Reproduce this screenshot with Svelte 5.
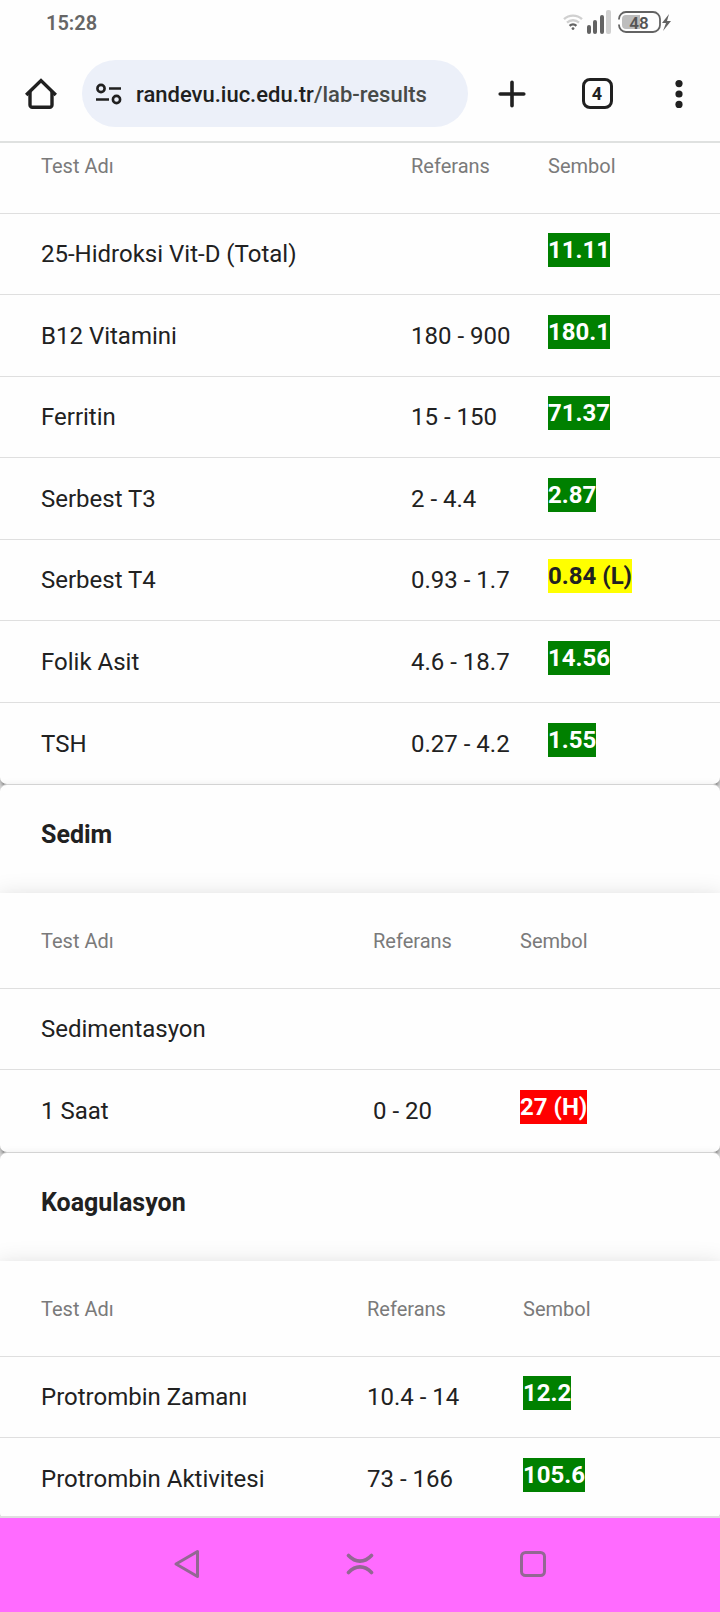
<script>
    const groups = [
        {
            title: '',
            refWidth: 137,
            symbolWidth: 172,
            tests: [
                { name: '25-Hidroksi Vit-D (Total)', ref: '', value: '11.11', level: 'normal' },
                { name: 'B12 Vitamini', ref: '180 - 900', value: '180.1', level: 'normal' },
                { name: 'Ferritin', ref: '15 - 150', value: '71.37', level: 'normal' },
                { name: 'Serbest T3', ref: '2 - 4.4', value: '2.87', level: 'normal' },
                { name: 'Serbest T4', ref: '0.93 - 1.7', value: '0.84 (L)', level: 'low' },
                { name: 'Folik Asit', ref: '4.6 - 18.7', value: '14.56', level: 'normal' },
                { name: 'TSH', ref: '0.27 - 4.2', value: '1.55', level: 'normal' }
            ]
        },
        {
            title: 'Sedim',
            refWidth: 147,
            symbolWidth: 200,
            tests: [
                { name: 'Sedimentasyon', ref: '', value: '', level: '' },
                { name: '1 Saat', ref: '0 - 20', value: '27 (H)', level: 'high' }
            ]
        },
        {
            title: 'Koagulasyon',
            refWidth: 156,
            symbolWidth: 197,
            tests: [
                { name: 'Protrombin Zamanı', ref: '10.4 - 14', value: '12.2', level: 'normal' },
                { name: 'Protrombin Aktivitesi', ref: '73 - 166', value: '105.6', level: 'normal' }
            ]
        }
    ];
</script>

<div class="screen">
    <div class="statusBar">
        <span class="clock">15:28</span>
        <div class="statusIcons">
            <svg class="wifi" width="20" height="18" viewBox="0 0 20 18" fill="none" stroke-linecap="butt">
                <path d="M1 6.2a13 13 0 0 1 18 0" stroke="#d0d0d0" stroke-width="2.4" />
                <path d="M4 9.6a9 9 0 0 1 12 0" stroke="#d0d0d0" stroke-width="2.4" />
                <path d="M6.6 12.8a5 5 0 0 1 6.8 0" stroke="#636363" stroke-width="2.4" />
                <circle cx="10" cy="15.6" r="1.4" fill="#636363" />
            </svg>
            <svg width="24" height="24" viewBox="0 0 24 24">
                <rect x="0" y="15" width="4" height="9" rx="2" fill="#636363" />
                <rect x="6" y="10" width="4" height="14" rx="2" fill="#636363" />
                <rect x="13" y="5" width="4" height="19" rx="2" fill="#636363" />
                <rect x="19" y="0" width="5" height="24" rx="2" fill="#d0d0d0" />
            </svg>
            <div class="battery">
                <svg width="54" height="22" viewBox="0 0 54 22">
                    <path d="M5 4h17v14H8a4 4 0 0 1-4-4V8a4 4 0 0 1 4-4z" fill="#bdbdbd" />
                    <path d="M1 8.500V8a7 7 0 0 1 7-7h27a7 7 0 0 1 7 7v6a7 7 0 0 1-7 7H8a7 7 0 0 1-7-7v-.5" fill="none" stroke="#636363" stroke-width="1.8" />
                    <path d="M51 3l-7 9h4l-3 8 8-10h-4z" fill="#636363" />
                </svg>
                <span class="batteryText">48</span>
            </div>
        </div>
    </div>

    <header class="toolbar">
        <button class="homeButton" aria-label="Home">
            <svg width="32" height="32" viewBox="0 0 32 32" fill="none" stroke="#202020" stroke-width="3.4">
                <path d="M1.200 17L16 2.600 30.800 17" />
                <path d="M5 13.500V27a2.300 2.300 0 0 0 2.300 2.300h17.400A2.300 2.300 0 0 0 27 27V13.500" />
            </svg>
        </button>
        <div class="address">
            <button class="siteInfo" aria-label="Site information">
                <svg width="26" height="22" viewBox="0 0 26 22" fill="none" stroke="#202020" stroke-width="2.600">
                    <circle cx="5" cy="5.500" r="3.600" />
                    <path d="M13 5.500h12M0 16.500h13" />
                    <circle cx="20.500" cy="16.500" r="3.600" />
                </svg>
            </button>
            <a class="url" href="#lab-results">randevu.iuc.edu.tr<span class="path">/lab-results</span></a>
        </div>
        <button class="newTab" aria-label="New tab">
            <svg width="28" height="28" viewBox="0 0 28 28" stroke="#202020" stroke-width="3.600" stroke-linecap="round">
                <path d="M14 2.200v23.600M2.200 14h23.600" />
            </svg>
        </button>
        <button class="toolButton" aria-label="4 open tabs">
            <span class="tabCount">4</span>
        </button>
        <button class="toolButton" aria-label="Menu">
            <svg width="8" height="28" viewBox="0 0 8 28" fill="#202020">
                <circle cx="4" cy="3.600" r="3.600" />
                <circle cx="4" cy="14" r="3.600" />
                <circle cx="4" cy="24.400" r="3.600" />
            </svg>
        </button>
    </header>

    <main class="page">
        <div class="results">
            {#each groups as group (group.title)}
            <section class="card">
                {#if group.title}
                    <h2 class="title">{group.title}</h2>
                {/if}
                <table>
                    <colgroup>
                        <col />
                        <col style="width: {group.refWidth}px" />
                        <col style="width: {group.symbolWidth}px" />
                    </colgroup>
                    <thead>
                        <tr>
                            <th>Test Adı</th>
                            <th>Referans</th>
                            <th>Sembol</th>
                        </tr>
                    </thead>
                    <tbody>
                        {#each group.tests as test (test.name)}
                        <tr>
                            <td>{test.name}</td>
                            <td>{test.ref}</td>
                            <td class="symbol">
                                {#if test.value}
                                    <span class="badge {test.level}">{test.value}</span>
                                {/if}
                            </td>
                        </tr>
                        {/each}
                    </tbody>
                </table>
            </section>
            {/each}
        </div>
    </main>

    <nav class="navBar">
        <button aria-label="Back">
            <svg width="28" height="30" viewBox="0 0 28 30" fill="none" stroke="#936793" stroke-width="3" stroke-linejoin="round">
                <path d="M24.500 2.500v25L3 15z" />
            </svg>
        </button>
        <button aria-label="Home screen">
            <svg width="28" height="22" viewBox="0 0 28 22" fill="none" stroke="#936793" stroke-width="3.600" stroke-linecap="round">
                <path d="M2.500 2.500c7 7.500 16 7.500 23 0M2.500 19.500c7-7.500 16-7.500 23 0" />
            </svg>
        </button>
        <button aria-label="Recent apps">
            <svg width="26" height="26" viewBox="0 0 26 26" fill="none" stroke="#936793" stroke-width="3">
                <rect x="1.500" y="1.500" width="23" height="23" rx="4" />
            </svg>
        </button>
    </nav>
</div>

<style>
    :global(body) {
        margin: 0;
        background: #fefefe;
    }

    .screen {
        display: flex;
        flex-direction: column;
        height: 100vh;
        overflow: hidden;
        background: #fefefe;
        color: #212121;
        font-family: Roboto, sans-serif;
    }

    button {
        display: flex;
        align-items: center;
        justify-content: center;
        padding: 0;
        border: 0;
        background: none;
        font-family: inherit;
        color: inherit;
    }

    svg {
        display: block;
    }

    .statusBar {
        display: flex;
        align-items: center;
        justify-content: space-between;
        height: 46px;
        padding: 0 48px 0 46px;
        flex: none;
    }

    .clock {
        font-size: 20px;
        font-weight: 600;
        color: #666;
    }

    .statusIcons {
        display: flex;
        align-items: center;
        gap: 4px;
        height: 44px;
        align-self: flex-start;
    }

    .battery {
        position: relative;
        margin-left: 3px;
    }

    .batteryText {
        position: absolute;
        top: 0;
        left: 0;
        width: 42px;
        line-height: 24px;
        font-size: 17px;
        font-weight: 600;
        text-align: center;
        color: #555;
    }

    .toolbar {
        display: flex;
        align-items: center;
        height: 95px;
        flex: none;
        border-bottom: 2px solid #dfe1e0;
    }

    .homeButton,
    .toolButton {
        width: 82px;
        height: 68px;
    }

    .newTab {
        width: 88px;
        height: 68px;
    }

    .address {
        display: flex;
        align-items: center;
        flex: 1;
        gap: 14px;
        height: 67px;
        padding-left: 14px;
        box-sizing: border-box;
        border-radius: 34px;
        background: #ecf0f9;
    }

    .url {
        font-size: 22px;
        font-weight: 500;
        line-height: 28px;
        padding-top: 2px;
        color: #202020;
        text-decoration: none;
        white-space: nowrap;
    }

    .path {
        color: #474a48;
    }

    .tabCount {
        width: 31px;
        height: 31px;
        box-sizing: border-box;
        border: 3px solid #202020;
        border-radius: 8px;
        font-size: 18px;
        font-weight: 700;
        line-height: 25px;
        text-align: center;
    }

    .page {
        flex: 1;
        min-height: 0;
        overflow: hidden;
    }

    /* list is scrolled a little, so the first header sits partly under the toolbar */
    .results {
        margin-top: -26px;
    }

    .card {
        position: relative;
        border-top: 1px solid #d3d3d3;
        border-radius: 7px;
        background: #fefefe;
        box-shadow: 0 5px 2px -3px rgba(0,0,0,0.2), 0 3px 3px rgba(0,0,0,0.14), 0 2px 9px rgba(0,0,0,0.12);
    }

    .title {
        margin: 0;
        padding-left: 41px;
        font-size: 25px;
        font-weight: 700;
        line-height: 100px;
        padding-bottom: 8px;
    }

    table {
        width: 100%;
        table-layout: fixed;
        border-collapse: separate;
        border-spacing: 0;
        border-radius: 0 0 7px 7px;
        background: #fefefe;
        box-shadow: 0 8px 8px -5px rgba(0,0,0,0.2), 0 14px 17px 2px rgba(0,0,0,0.14), 0 5px 24px 3px rgba(0,0,0,0.12);
    }

    th,
    td {
        box-sizing: border-box;
        padding: 0;
        border-bottom: 1px solid #dfdfdf;
        text-align: left;
        vertical-align: middle;
        white-space: nowrap;
    }

    th {
        height: 96px;
        font-size: 20px;
        font-weight: 400;
        color: #7a7a7a;
    }

    td {
        height: 82px;
        font-size: 24px;
    }

    tbody tr:nth-child(odd) td {
        height: 81px;
    }

    tbody tr:last-child td {
        border-bottom: 0;
    }

    th:first-child,
    td:first-child {
        padding-left: 41px;
    }

    td.symbol {
        padding-bottom: 8px;
    }

    .badge {
        display: inline-block;
        line-height: 34px;
        font-weight: 700;
        vertical-align: top;
    }

    .normal {
        background: #008000;
        color: #fff;
    }

    .low {
        background: #ffff00;
    }

    .high {
        background: #ff0000;
        color: #fff;
    }

    .navBar {
        display: flex;
        justify-content: center;
        height: 94px;
        flex: none;
        border-top: 2px solid #dfdfdf;
        background: #ff6bff;
        position: relative;
    }

    .navBar button {
        width: 24%;
        padding-bottom: 2px;
    }
</style>
